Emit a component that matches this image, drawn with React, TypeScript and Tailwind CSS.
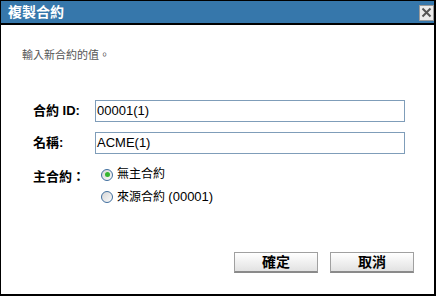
import React from 'react';

const FONT = '"Liberation Sans", "Noto Sans CJK TC", sans-serif';

function Radio({ checked }: { checked?: boolean }) {
  return (
    <span className="relative flex h-[12px] w-[12px] shrink-0 items-center justify-center rounded-full border border-[#3f6e9e] bg-gradient-to-br from-[#d6d6d6] to-[#fbfbfb]">
      {checked && <span className="h-[5px] w-[5px] rounded-full bg-[#35b52f]" />}
    </span>
  );
}

function Field({ label, value }: { label: string; value: string }) {
  return (
    <>
      <span className="self-center text-[13px] font-bold text-black">{label}</span>
      <div className="flex h-[22px] items-center border border-[#7f9db9] bg-white px-[1px] text-[13px] text-black">
        {value}
      </div>
    </>
  );
}

export default function App() {
  return (
    <div
      className="flex h-[296px] w-[436px] flex-col border-b-2 border-l border-r-2 border-t border-black bg-white"
      style={{ fontFamily: FONT }}
    >
      <div className="flex h-[24px] shrink-0 items-center justify-between border-b-2 border-black bg-[#3677ab] pl-[7px]">
        <span className="text-[14px] font-bold leading-none text-white">複製合約</span>
        <button className="mt-[1px] flex h-[16px] w-[15px] items-center justify-center border border-[#9a9a9a] bg-[#ececec]">
          <svg width="11" height="11" viewBox="0 0 11 11">
            <path d="M1.5 1.5L9.5 9.5M9.5 1.5L1.5 9.5" stroke="#555" strokeWidth="2" />
          </svg>
        </button>
      </div>

      <div className="flex flex-1 flex-col">
        <p className="pl-[21px] pt-[23px] text-[11px] leading-[14px] text-[#555]">輸入新合約的值。</p>

        <div className="mt-[38px] grid grid-cols-[62px_310px] gap-y-[10px] pl-[32px]">
          <Field label="合約 ID:" value="00001(1)" />
          <Field label="名稱:" value="ACME(1)" />
          <span className="pt-[3px] text-[13px] font-bold text-black">主合約：</span>
          <div className="flex flex-col gap-[7px] pl-[6px] pt-[3px] text-[12px] text-black">
            <label className="flex items-center gap-[4px] leading-[15px]">
              <Radio checked />
              無主合約
            </label>
            <label className="flex items-center gap-[4px] leading-[15px]">
              <Radio />
              <span>
                來源合約 <span className="text-[13px]">(00001)</span>
              </span>
            </label>
          </div>
        </div>

        <div className="mt-auto flex justify-end gap-[12px] pb-[21px] pr-[20px]">
          {['確定', '取消'].map((t) => (
            <button
              key={t}
              className="flex h-[21px] w-[84px] items-center justify-center border border-[#a0a0a0] border-b-2 border-b-[#8a8a8a] bg-gradient-to-b from-[#ffffff] to-[#e2e2e2] text-[14px] font-bold text-black"
            >
              {t}
            </button>
          ))}
        </div>
      </div>
    </div>
  );
}
